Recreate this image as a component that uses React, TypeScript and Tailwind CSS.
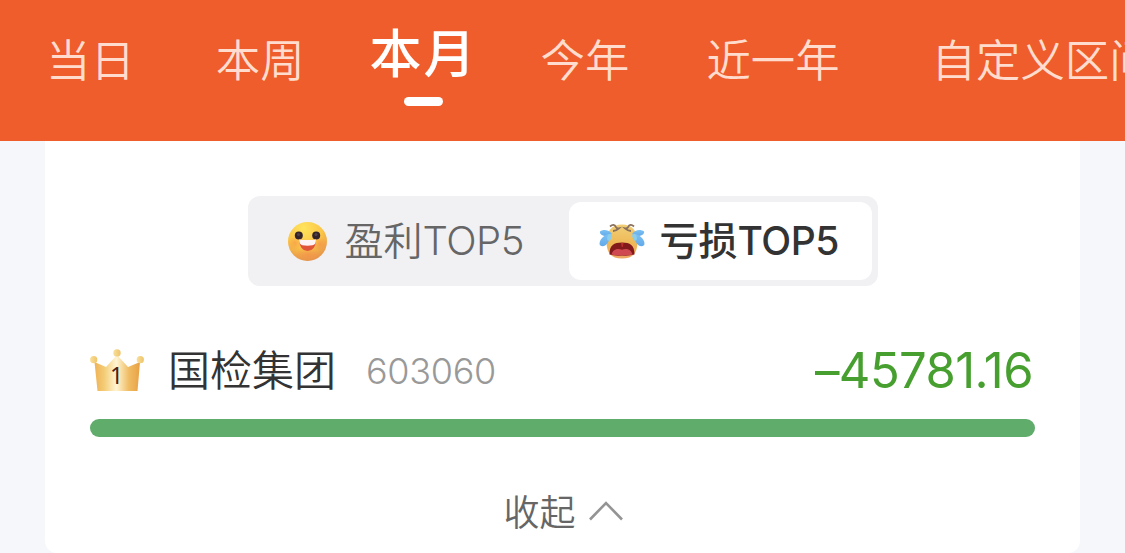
import clsx from 'clsx';

const tabs = [
  { label: '当日', className: 'ml-[46px]' },
  { label: '本周', className: 'ml-[81px]' },
  { label: '本月', className: 'ml-[65px]', active: true },
  { label: '今年', className: 'ml-[63px]' },
  { label: '近一年', className: 'ml-[77px]' },
  { label: '自定义区间', className: 'ml-[92px]' },
];

function SmileIcon() {
  return (
    <svg width="40" height="40" viewBox="0 0 40 40" className="shrink-0">
      <defs>
        <radialGradient id="smile-face" cx="0.4" cy="0.15" r="0.95">
          <stop offset="0" stopColor="#ffe45c" />
          <stop offset="0.5" stopColor="#fbc648" />
          <stop offset="0.85" stopColor="#e99a4a" />
          <stop offset="1" stopColor="#d98a4c" />
        </radialGradient>
        <radialGradient id="smile-blush">
          <stop offset="0" stopColor="#f68a4a" stopOpacity="0.55" />
          <stop offset="1" stopColor="#f68a4a" stopOpacity="0" />
        </radialGradient>
      </defs>
      <circle cx="19.500" cy="20.500" r="19.500" fill="url(#smile-face)" />
      <circle cx="7" cy="22" r="7" fill="url(#smile-blush)" />
      <circle cx="32" cy="23" r="7" fill="url(#smile-blush)" />
      <ellipse cx="20" cy="34" rx="13" ry="6" fill="url(#smile-blush)" />
      <circle cx="10.800" cy="14.500" r="4" fill="#33242c" />
      <circle cx="28.200" cy="14.500" r="4" fill="#33242c" />
      <circle cx="10.500" cy="13.500" r="1.500" fill="#514049" />
      <circle cx="28" cy="13.500" r="1.500" fill="#514049" />
      <path d="M11 18.500Q19.500 19.500 28 18.500Q27.500 30 19.500 30Q12 30 11 18.500Z" fill="#e0543a" />
      <path d="M11 18.500Q19.500 19.500 28 18.500Q27.800 24 24.500 24.300Q19.500 25 14.500 24.300Q11.500 24 11 18.500Z" fill="#fff4f5" />
    </svg>
  );
}

function CryIcon() {
  return (
    <svg width="46" height="36" viewBox="0 0 46 36" className="shrink-0">
      <defs>
        <linearGradient id="cry-face" x1="0" y1="0" x2="0" y2="1">
          <stop offset="0" stopColor="#f1cf77" />
          <stop offset="0.55" stopColor="#efb957" />
          <stop offset="1" stopColor="#eda763" />
        </linearGradient>
        <linearGradient id="cry-tear" x1="0" y1="0" x2="0" y2="1">
          <stop offset="0" stopColor="#7cc2f3" />
          <stop offset="1" stopColor="#62a9ea" />
        </linearGradient>
      </defs>
      <path d="M23 1.500C33 1.500 38.500 8 38.500 18C38.500 30 34 35.500 23 35.500C12 35.500 7.500 30 7.500 18C7.500 8 13 1.500 23 1.500Z" fill="url(#cry-face)" />
      <path d="M10.500 31.500C10.500 22 15 19.500 23 19.500C31 19.500 35.500 22 35.500 31.500Q30 33 23 32.500Q16 33 10.500 31.500Z" fill="#82191b" />
      <path d="M12.500 31.500C14 26 19 25 23 26.800C27 25 32 26 33.500 31.500Q28 32.800 23 32.200Q18 32.800 12.500 31.500Z" fill="#cf4a50" />
      <path d="M22 20H24.500L24 23.500Q23.200 24.500 22.500 23.500Z" fill="#b92d2d" />
      <g fill="url(#cry-tear)">
        <path d="M13 11C10 6.500 4 6 1 8.500C0 11 5 14 9 13Z" />
        <path d="M10 11C4 12 -.5 18 .8 22C5 26 10 20 11 14Z" />
        <path d="M33 11C36 6.500 42 6 45 8.500C46 11 41 14 37 13Z" />
        <path d="M36 11C42 12 46.500 18 45.200 22C41 26 36 20 35 14Z" />
      </g>
      <path d="M9 12Q12 9 13 13L11.500 17Q8 19 8 15Z" fill="#8acdec" />
      <path d="M37 12Q34 9 33 13L34.500 17Q38 19 38 15Z" fill="#8acdec" />
      <path d="M11 3.500Q15 -.2 17 4.200Q18 5.700 20 5.300Q17 8 14 8" fill="none" stroke="#89705f" strokeWidth="1.800" />
      <path d="M35 3.500Q31 -.2 29 4.200Q28 5.700 26 5.300Q29 8 32 8" fill="none" stroke="#89705f" strokeWidth="1.800" />
    </svg>
  );
}

function CrownIcon() {
  return (
    <svg width="54" height="43" viewBox="0 0 54 43" className="mb-[1px] shrink-0">
      <defs>
        <linearGradient id="crown-body" x1="0" y1="0" x2="1" y2="0">
          <stop offset="0" stopColor="#efb254" />
          <stop offset="0.22" stopColor="#f4cd78" />
          <stop offset="0.48" stopColor="#fff5d3" />
          <stop offset="0.75" stopColor="#f0bd65" />
          <stop offset="1" stopColor="#e9a043" />
        </linearGradient>
        <linearGradient id="crown-ball" x1="0" y1="0" x2="1" y2="0">
          <stop offset="0" stopColor="#f8e09a" />
          <stop offset="1" stopColor="#efc369" />
        </linearGradient>
      </defs>
      <path d="M4.500 13L16 18L27 6L38 18L50 13L47.500 42H7.500Z" fill="url(#crown-body)" />
      <circle cx="3.700" cy="10.700" r="3.600" fill="url(#crown-ball)" />
      <circle cx="27" cy="3.900" r="3.700" fill="url(#crown-ball)" />
      <circle cx="50.300" cy="10.700" r="3.600" fill="url(#crown-ball)" />
      <text x="26.500" y="35" textAnchor="middle" fontFamily="'Noto Sans', sans-serif" fontSize="23" fill="#48201c">1</text>
    </svg>
  );
}

export default function App() {
  return (
    <div className="h-[553px] w-[1125px] overflow-hidden bg-[#f6f7fa] font-['Inter','Noto_Sans_CJK_SC',sans-serif]">
      {/* Period tabs */}
      <header className="flex h-[141px] overflow-hidden bg-[#ee5d2b] whitespace-nowrap">
        {tabs.map((tab) => (
          <div
            key={tab.label}
            className={clsx(
              'flex shrink-0 flex-col items-center',
              tab.className,
              tab.active
                ? 'pt-[25px] text-[52px] leading-[60px] font-medium tracking-[2px] text-white'
                : 'pt-[31px] text-[44.4px] leading-[60px] font-[350] text-[#ffdccd]',
            )}
          >
            {tab.label}
            {tab.active && <span className="mt-[12px] h-[9px] w-[39px] rounded-full bg-white" />}
          </div>
        ))}
      </header>

      <main className="mx-[45px] flex h-[412px] flex-col items-center rounded-b-xl bg-white px-[45px] pt-[55px]">
        {/* Profit / loss switch */}
        <div className="flex h-[90px] w-[630px] rounded-xl bg-[#f1f1f4] p-[6px] whitespace-nowrap">
          <button className="flex w-[315px] items-center pl-[34px] text-[39px] text-[#666]">
            <SmileIcon />
            <span className="ml-[17px] font-[350]">
              盈利<span className="text-[40px] tracking-[-0.5px]">TOP5</span>
            </span>
          </button>
          <button className="flex flex-1 items-center rounded-xl bg-white pl-[30px] text-[39px] text-[#333]">
            <CryIcon />
            <span className="ml-[15px] font-medium">
              亏损<span className="tracking-[-0.5px]">TOP5</span>
            </span>
          </button>
        </div>

        {/* Ranking row */}
        <div className="mt-[55px] flex h-[60px] w-full items-center whitespace-nowrap">
          <CrownIcon />
          <span className="mb-[2px] ml-[24px] text-[42px] font-[350] text-[#333]">国检集团</span>
          <span className="ml-[30px] text-[36px] font-[350] tracking-[-0.3px] text-[#999]">603060</span>
          <span className="mr-[2px] ml-auto text-[49px] font-[370] tracking-[-0.6px] text-[#469f2e]">–45781.16</span>
        </div>
        <div className="mt-[18px] h-[18px] w-full shrink-0 rounded-full bg-[#5fac6b]" />

        <button className="mt-[51px] ml-[1px] flex h-[50px] items-center text-[36px] font-[350] text-[#666]">
          收起
          <svg width="34" height="20" viewBox="0 0 34 20" className="mb-[5px] ml-[13px]" fill="none">
            <path d="M1 18.500L17 2L33 18.500" stroke="#949494" strokeWidth="2.600" />
          </svg>
        </button>
      </main>
    </div>
  );
}
